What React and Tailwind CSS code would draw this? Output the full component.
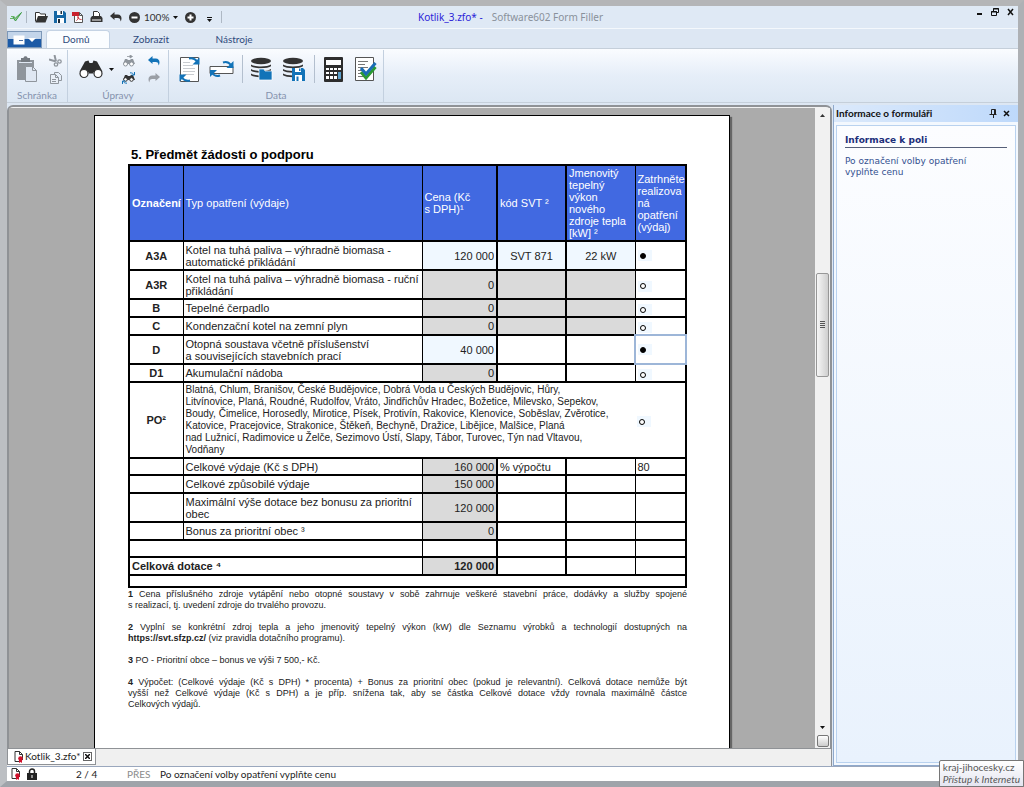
import React from 'react';

const ui = "font-['Lato',sans-serif]";

function Icon({ w, h, children, className = '' }) {
  return (
    <svg width={w} height={h} viewBox={`0 0 ${w} ${h}`} fill="none" className={`block shrink-0 ${className}`} aria-hidden="true">
      {children}
    </svg>
  );
}

function Btn({ label, className = '', children }) {
  return (
    <button type="button" aria-label={label} className={`flex shrink-0 items-center justify-center ${className}`}>
      {children}
    </button>
  );
}

const Caret = () => (
  <Icon w={5} h={3}><path d="M0 0h5L2.5 3z" fill="#111" /></Icon>
);

const UndoArrow = ({ color }) => (
  <Icon w={12} h={10}>
    <path d="M0 4 4.5 0v2.6h3.2c2.600 0 3.800 1.800 3.800 3.800 0 1.200-.4 2.300-1 3.100.1-2.500-.9-3.500-2.800-3.500H4.500V8z" fill={color} />
  </Icon>
);

const RedoArrow = ({ color }) => (
  <Icon w={12} h={10}>
    <path d="M12 4 7.500 0v2.600H4.300C1.700 2.600.5 4.400.5 6.400c0 1.200.4 2.300 1 3.100C1.400 7 2.400 6 4.300 6h3.200v2z" fill={color} />
  </Icon>
);

const Binoculars = ({ w, h, color }) => (
  <svg width={w} height={h} viewBox="0 0 24 18" className="block" aria-hidden="true">
    <path d="M6 1 9.500 0l1 2.500h3L14.500 0 18 1l5.500 10-5.500 2-3-1.500H9L6 13 .5 11z" fill={color} />
    <circle cx="5" cy="13" r="4" fill="#fff" stroke={color} strokeWidth="1.200" />
    <circle cx="19" cy="13" r="4" fill="#fff" stroke={color} strokeWidth="1.200" />
    <rect x="9.500" y="8" width="5" height="5" fill={color} />
  </svg>
);

const SealDoc = ({ color = '#333' }) => (
  <Icon w={10} h={12}>
    <path d="M1 .5h4.500l3 3V9M1 .5v10h4M5.500.5v3h3" stroke={color} fill="#fff" />
    <circle cx="6.500" cy="7.500" r="2.300" fill="#d0112b" />
    <path d="M5 8.500h3V12l-1.500-1L5 12z" fill="#d0112b" />
  </Icon>
);

const Database = ({ children }) => (
  <Icon w={22} h={24}>
    <path d="M0 7.500c3 2.600 17 2.600 20 0v1.800c-3 2.600-17 2.600-20 0zM0 12c3 2.600 17 2.600 20 0v1.800c-3 2.600-17 2.600-20 0zM0 16.500c3 2.600 17 2.600 20 0v1.800c-3 2.600-17 2.600-20 0z" fill="#333" />
    <ellipse cx="10" cy="4" rx="10" ry="3.200" fill="#333" />
    {children}
  </Icon>
);

const FloppyBlue = () => (
  <g>
    <path d="M9 11h11l2 2v11H9z" fill="#1273b8" />
    <path d="M12 11h6v4h-6zM12 18h7v6h-7z" fill="#fff" />
    <path d="M16 11.500h1.500V14H16zM13.500 19.500h2V24h-2z" fill="#1273b8" />
  </g>
);

function QuickBar() {
  return (
    <div className="flex flex-1 items-center">
      <Btn label="Software602" className="ml-[3px] w-3">
        <Icon w={12} h={10}><path d="M1 4.500h3.500M0 6.500h3" stroke="#67b567" /><path d="M3 5.500 5.500 9 11.500.5 5.500 6z" stroke="#3f9b45" fill="#9fd09f" /></Icon>
      </Btn>
      <span className="ml-[4px] h-3 w-px bg-[#aeb8c4]" />
      <Btn label="Otevřít" className="ml-[8px] w-3">
        <Icon w={13} h={11}><path d="M.5 9.500v-9h4l1 1.500h5v2" stroke="#333" fill="#fff" /><path d="M3 4h10l-2.500 6.500H.5z" fill="#333" /></Icon>
      </Btn>
      <Btn label="Uložit" className="ml-[7px] w-3">
        <Icon w={12} h={12}><path d="M0 0h10l2 2v10H0z" fill="#1667a4" /><path d="M3 0h6v4H3zM3 7h7v5H3z" fill="#fff" /><path d="M6.500 0H8v3H6.500zM4 8h2v4H4z" fill="#1f2d3b" /></Icon>
      </Btn>
      <Btn label="Uložit jako PDF" className="ml-[6px] w-3">
        <Icon w={12} h={12}><path d="M2.500 1.500h5l3 3v7h-8zM7.500 1.500v3h3" fill="#fff" stroke="#555" /><path d="M0 1h7v4H0z" fill="#c9202d" /><path d="M4.500 9.500c2-1 2-4 1.500-4s0 3 3.500 3" stroke="#c9202d" /></Icon>
      </Btn>
      <Btn label="Tisk" className="ml-[6px] w-3">
        <Icon w={13} h={12}><path d="M3.500 6V.5h4l2 2V6" stroke="#333" fill="#fff" /><path d="M2 5h9l1.500 2v4H.5V7z" fill="#333" /><path d="M2 9h9" stroke="#fff" /></Icon>
      </Btn>
      <Btn label="Zpět" className="ml-[8px] w-3"><UndoArrow color="#333" /></Btn>
      <Btn label="Zmenšit" className="ml-[6px] w-3">
        <Icon w={11} h={11}><circle cx="5.500" cy="5.500" r="5.500" fill="#333" /><path d="M2.500 5.500h6" stroke="#fff" strokeWidth="2" /></Icon>
      </Btn>
      <span className="ml-[4px] w-6 text-[10px] text-[#333]">100%</span>
      <Btn label="Měřítko" className="ml-[3px] w-2"><Caret /></Btn>
      <Btn label="Zvětšit" className="ml-[5px] w-3">
        <Icon w={11} h={11}><circle cx="5.500" cy="5.500" r="5.500" fill="#333" /><path d="M2.500 5.500h6M5.500 2.500v6" stroke="#fff" strokeWidth="2" /></Icon>
      </Btn>
      <Btn label="Přizpůsobit panel" className="ml-[9px] mt-1 w-2">
        <Icon w={5} h={5}><path d="M0 .5h5" stroke="#111" /><path d="M0 2h5L2.500 5z" fill="#111" /></Icon>
      </Btn>
      <span className="ml-[8px] h-3 w-px bg-[#aeb8c4]" />
    </div>
  );
}

function TitleBar() {
  return (
    <header className="flex h-[22px] shrink-0 items-center bg-[#dfe9f5]">
      <QuickBar />
      <h1 className="flex gap-[9px] font-['Noto_Sans',sans-serif] text-[10px]">
        <span className="text-[#2b22d8]">Kotlik_3.zfo* -</span>
        <span className="text-[#8a919b]">Software602 Form Filler</span>
      </h1>
      <div className="mb-[10px] flex flex-1 justify-end gap-[8px] pr-[4px]">
        <Btn label="Minimalizovat"><Icon w={7} h={8}><path d="M1 6h5" stroke="#111" strokeWidth="2" /></Icon></Btn>
        <Btn label="Obnovit"><Icon w={8} h={8}><path d="M2.500 3V.5h5v4H6M2 1h6" stroke="#111" /><path d="M.5 3.500h5v4h-5zM0 4h6" stroke="#111" /></Icon></Btn>
        <Btn label="Zavřít"><Icon w={7} h={8}><path d="m1 1 5 6M6 1 1 7" stroke="#111" strokeWidth="1.500" /></Icon></Btn>
      </div>
    </header>
  );
}

function Tabs() {
  return (
    <nav className="flex h-5 shrink-0 items-end border-t border-[#f4f8fc] bg-[#dde7f3] text-[10px] text-[#2f4a7c]">
      <Btn label="Nabídka aplikace" className="h-[17px] w-[35px] border border-[#7d98b8] bg-linear-to-b from-[#c3d5ea] from-45% to-[#1c5aa6] to-50%">
        <Icon w={24} h={10}><path d="M.5.5h11v9H.5z" fill="#fff" /><path d="M6 5.500h4" stroke="#4a6fa5" /><path d="M15 3h8l-4 4z" fill="#fff" /></Icon>
      </Btn>
      <button type="button" className="ml-1 h-[18px] w-16 rounded-t-sm border border-b-0 border-[#c5d3e4] bg-[#fbfdff] pr-1">Domů</button>
      <button type="button" className="h-[18px] w-[82px]">Zobrazit</button>
      <button type="button" className="h-[18px] w-[84px]">Nástroje</button>
    </nav>
  );
}

function Group({ label, className, children }) {
  return (
    <section className={`flex flex-col border-r border-[#c3d0df] ${className}`}>
      <div className="flex flex-1 items-center">{children}</div>
      <span className="h-[14px] text-center leading-[14px] text-[#8592ad]">{label}</span>
    </section>
  );
}

const Sep = () => <span className="block h-7 w-px bg-[#b3bfce]" />;

function Ribbon() {
  return (
    <div className="flex h-[55px] shrink-0 border-y border-[#c5cfda] bg-linear-to-b from-[#fafcff] via-[#e6eef8] to-[#dce7f3] pt-px text-[10px]">
      <Group label="Schránka" className="w-[61px]">
        <Btn label="Vložit" className="ml-[10px]">
          <Icon w={20} h={26}>
            <path d="M0 4h17v20H0z" fill="#8f959c" /><path d="M4 2h2.500c0-2.500 4-2.500 4 0H13v4H4z" fill="#757b82" /><path d="M2 6.500h13" stroke="#dfe7f2" />
            <path d="M8.500 10.500h7l4 4v11h-11z" fill="#dfe7f2" stroke="#8f959c" /><path d="M15.500 10.500v4h4" stroke="#8f959c" />
          </Icon>
        </Btn>
        <div className="ml-3 flex flex-col gap-[5px]">
          <Btn label="Vyjmout"><Icon w={13} h={12}><path d="M5.500 0 7 6.500M0 4.500l7 2" stroke="#8f959c" strokeWidth="2" /><circle cx="10.500" cy="6.500" r="1.700" stroke="#8f959c" strokeWidth="1.300" /><circle cx="7" cy="9.500" r="1.700" stroke="#8f959c" strokeWidth="1.300" /></Icon></Btn>
          <Btn label="Kopírovat"><Icon w={12} h={12}><path d="M4.500 2.500v-2h4l3 3v5h-3" stroke="#8f959c" /><path d="M.5 2.500h5l3 3v6h-8zM5.500 2.500v3h3M2 7.500h4M2 9.500h4" stroke="#8f959c" fill="#e9eff7" /></Icon></Btn>
        </div>
      </Group>
      <Group label="Úpravy" className="w-[101px]">
        <Btn label="Najít" className="ml-[11px]"><Binoculars w={24} h={19} color="#2d2d2d" /></Btn>
        <Btn label="Možnosti hledání" className="ml-[6px]"><Caret /></Btn>
        <div className="ml-[8px] flex flex-col gap-[5px]">
          <Btn label="Najít další">
            <Icon w={13} h={12}><path d="M3 4h2l1 1h2l1-1h2l2 5H1z" fill="#8f959c" /><circle cx="3.500" cy="9" r="2" fill="#fff" stroke="#8f959c" /><circle cx="9.500" cy="9" r="2" fill="#fff" stroke="#8f959c" /><path d="M5 1.500h4M8 0l2.500 1.500L8 3z" stroke="#8f959c" fill="#8f959c" strokeWidth=".8" /></Icon>
          </Btn>
          <Btn label="Nahradit">
            <Icon w={13} h={12}><path d="M3 3h2l1 1h2l1-1h2l2 5H1z" fill="#333" /><circle cx="3.500" cy="7.500" r="1.800" fill="#fff" stroke="#333" /><circle cx="9.500" cy="7.500" r="1.800" fill="#fff" stroke="#333" /><path d="M8 .8c2 0 3 .5 4 2M12.500 0v3h-3M5 11.200c-2 0-3-.5-4-2M.5 12V9h3" stroke="#1273b8" /></Icon>
          </Btn>
        </div>
        <div className="ml-[13px] flex flex-col gap-[7px]">
          <Btn label="Zpět"><UndoArrow color="#1273b8" /></Btn>
          <Btn label="Znovu"><RedoArrow color="#9a9fa6" /></Btn>
        </div>
      </Group>
      <Group label="Data" className="w-[215px]">
        <Btn label="Obnovit formulář" className="ml-[10px]">
          <Icon w={22} h={27}>
            <path d="M1.500 1.500h18v24h-18z" fill="#fff" stroke="#555" /><path d="M4 6.500h7M4 9.500h10M4 12.500h12M4 15.500h12M4 18.500h11" stroke="#c9ccd0" />
            <path d="M10 2.500c4-1 6 0 8 3" stroke="#1273b8" strokeWidth="2" /><path d="M20.500 1.500v7h-7z" fill="#1273b8" />
            <path d="M11 24.500c-4 1-6 0-8-3" stroke="#1273b8" strokeWidth="2" /><path d="M.5 25.500v-7h7z" fill="#1273b8" />
          </Icon>
        </Btn>
        <Btn label="Obnovit pole" className="ml-[8px]">
          <Icon w={26} h={18}>
            <path d="M1 6.500h23v7H1z" fill="#fff" stroke="#555" />
            <path d="M14 2.500c4-1.500 6 0 8 2.500" stroke="#1273b8" strokeWidth="2" /><path d="M24.500 1v7h-7z" fill="#1273b8" />
            <path d="M11 15.500c-4 1.500-6 0-8-2.500" stroke="#1273b8" strokeWidth="2" /><path d="M1 17v-7h7z" fill="#1273b8" />
          </Icon>
        </Btn>
        <span className="ml-[7px]"><Sep /></span>
        <Btn label="Načíst data" className="ml-[8px]">
          <Database><path d="M8 12h5l1 2h7v9H8z" fill="#1273b8" stroke="#fff" strokeWidth=".7" /></Database>
        </Btn>
        <Btn label="Uložit data" className="ml-[10px]"><Database><FloppyBlue /></Database></Btn>
        <span className="ml-[9px]"><Sep /></span>
        <Btn label="Přepočítat" className="ml-[9px]">
          <Icon w={19} h={25}>
            <rect width="19" height="25" rx="1" fill="#2d2d2d" /><path d="M2 3h15v5H2z" fill="#fff" />
            <path d="M2 11h3v2H2zM6 11h3v2H6zM10 11h3v2h-3zM14 11h3v2h-3zM2 15h3v2H2zM6 15h3v2H6zM10 15h3v2h-3zM2 19h3v3H2zM6 19h3v3H6zM10 19h3v3h-3z" fill="#fff" />
            <path d="M14 15h3v7h-3z" fill="#5b9fca" />
          </Icon>
        </Btn>
        <Btn label="Zkontrolovat" className="ml-3">
          <Icon w={22} h={26}>
            <path d="M.5 1.500h18v23H.5z" fill="#fff" stroke="#555" /><path d="M3 5.500h10M3 8.500h7M3 11.500h10M3 14.500h4M3 17.500h4M3 20.500h6" stroke="#777" />
            <path d="m6 16 5 6L20.500 11" stroke="#2b9a33" strokeWidth="3" /><path d="m6 12 5 6L20.500 7" stroke="#1b6db5" strokeWidth="3" />
          </Icon>
        </Btn>
      </Group>
    </div>
  );
}

const cell = 'border-y-2 border-black px-[2px]';

function Field({ label, value, align }) {
  return <input aria-label={label} defaultValue={value} className={`block w-full bg-transparent p-0 leading-[12px] outline-none ${align}`} />;
}

function Choice({ name, checked, top = 'pt-[3px]' }) {
  return (
    <div className={top}>
      <div className="flex h-[11px] w-[14px] items-center bg-[#f0f8ff] pl-[2px]">
        <input type="radio" name={name} aria-label={`Realizovat ${name}`} defaultChecked={checked} className="h-[6px] w-[6px] appearance-none rounded-full border border-black bg-white checked:bg-black" />
      </div>
    </div>
  );
}

const gray = 'bg-[#dadada]';
const pale = 'bg-[#f0f8ff]';

const measures = [
  { id: 'A3A', h: 'h-[29px]', text: <>Kotel na tuhá paliva – výhradně biomasa -<br />automatické přikládání</>, price: '120 000', edit: true, svt: 'SVT 871', kw: '22 kW', fill: pale, on: true },
  { id: 'A3R', h: 'h-[29px]', text: <>Kotel na tuhá paliva – výhradně biomasa - ruční<br />přikládání</>, price: '0', fill: gray },
  { id: 'B', h: 'h-[18px]', text: 'Tepelné čerpadlo', price: '0', fill: gray },
  { id: 'C', h: 'h-[18px]', text: 'Kondenzační kotel na zemní plyn', price: '0', fill: gray },
  { id: 'D', h: 'h-[29px]', text: <>Otopná soustava včetně příslušenství<br />a souvisejících stavebních prací</>, price: '40 000', edit: true, fill: '', on: true, focus: true },
  { id: 'D1', h: 'h-[18px]', text: 'Akumulační nádoba', price: '0', fill: '' },
];

const totals = [
  { h: 'h-[17px]', text: 'Celkové výdaje (Kč s DPH)', price: '160 000', note: '% výpočtu', last: '80' },
  { h: 'h-[18px]', text: 'Celkové způsobilé výdaje', price: '150 000' },
  { h: 'h-[29px]', text: <>Maximální výše dotace bez bonusu za prioritní<br />obec</>, price: '120 000' },
  { h: 'h-[18px]', text: 'Bonus za prioritní obec ³', price: '0' },
];

function FormTable() {
  return (
    <table className="w-full table-fixed border-collapse border-2 border-black text-[11px] leading-[12px] whitespace-nowrap text-[#222]">
      <colgroup>
        <col className="w-[54px]" /><col /><col className="w-[75px]" /><col className="w-[69px]" /><col className="w-[69px]" /><col className="w-[51px]" />
      </colgroup>
      <thead>
        <tr className="h-[76px] bg-[#4169e1] text-left text-white">
          <th className={`${cell} border-r`}>Označení</th>
          <th className={`${cell} border-r font-normal`}>Typ opatření (výdaje)</th>
          <th className={`${cell} border-r-2 font-normal`}>Cena (Kč<br />s DPH)¹</th>
          <th className={`${cell} border-r-2 font-normal`}>kód SVT ²</th>
          <th className={`${cell} border-r font-normal`}>Jmenovitý<br />tepelný<br />výkon<br />nového<br />zdroje tepla<br />[kW] ²</th>
          <th className={`${cell} font-normal`}>Zatrhněte<br />realizova<br />ná<br />opatření<br />(výdaj)</th>
        </tr>
      </thead>
      <tbody>
        {measures.map((m) => (
          <tr key={m.id} className={m.h}>
            <th className={`${cell} border-r text-center`}>{m.id}</th>
            <td className={`${cell} border-r`}>{m.text}</td>
            <td className={`${cell} border-r-2 text-right ${m.edit ? pale : gray}`}>
              {m.edit ? <Field label={`Cena ${m.id}`} value={m.price} align="text-right" /> : m.price}
            </td>
            <td className={`${cell} border-r-2 ${m.fill}`}>{m.svt && <Field label="Kód SVT" value={m.svt} align="text-center" />}</td>
            <td className={`${cell} border-r ${m.fill}`}>{m.kw && <Field label="Výkon" value={m.kw} align="text-center" />}</td>
            <td className={`${cell} ${m.focus ? 'outline-2 -outline-offset-1 outline-[#9db6d8]' : ''}`}><Choice name={m.id} checked={m.on} top={m.on ? 'pt-0' : 'pt-[3px]'} /></td>
          </tr>
        ))}
        <tr className="h-[76px]">
          <th className={`${cell} border-r text-center`}>PO²</th>
          <td className={`${cell} text-[10px]`} colSpan={4}>
            Blatná, Chlum, Branišov, České Budějovice, Dobrá Voda u Českých Budějovic, Hůry,<br />
            Litvínovice, Planá, Roudné, Rudolfov, Vráto, Jindřichův Hradec, Božetice, Milevsko, Sepekov,<br />
            Boudy, Čimelice, Horosedly, Mirotice, Písek, Protivín, Rakovice, Klenovice, Soběslav, Zvěrotice,<br />
            Katovice, Pracejovice, Strakonice, Štěkeň, Bechyně, Dražice, Libějice, Malšice, Planá<br />
            nad Lužnicí, Radimovice u Želče, Sezimovo Ústí, Slapy, Tábor, Turovec, Týn nad Vltavou,<br />
            Vodňany
          </td>
          <td className={cell}><Choice name="PO" /></td>
        </tr>
        {totals.map((t, i) => (
          <tr key={i} className={t.h}>
            <td className={`${cell} border-r`} />
            <td className={`${cell} border-r`}>{t.text}</td>
            <td className={`${cell} border-r-2 text-right ${gray}`}>{t.price}</td>
            <td className={`${cell} border-r-2`}>{t.note}</td>
            <td className={`${cell} border-r`} />
            <td className={cell}>{t.last}</td>
          </tr>
        ))}
        <tr className="h-[17px]">
          <td className={`${cell} border-r`} colSpan={2} />
          <td className={`${cell} border-r-2`} /><td className={`${cell} border-r-2`} /><td className={`${cell} border-r`} /><td className={cell} />
        </tr>
        <tr className="h-[18px] font-bold">
          <td className={`${cell} border-r`} colSpan={2}>Celková dotace ⁴</td>
          <td className={`${cell} border-r-2 text-right ${gray}`}>120 000</td>
          <td className={`${cell} border-r-2`} /><td className={`${cell} border-r`} /><td className={cell} />
        </tr>
        <tr className="h-[12px]"><td className={cell} colSpan={6} /></tr>
      </tbody>
    </table>
  );
}

const J = ({ children }) => <span className="block [text-align-last:justify]">{children}</span>;

function Page() {
  return (
    <article className="w-[636px] shrink-0 border border-b-0 border-black bg-white px-[33px] pt-[30px] font-['Liberation_Sans',Arial,sans-serif] shadow-[2px_2px_1px_#666]">
      <h2 className="pb-px pl-[3px] text-[13px] leading-[17px] font-bold text-black">5. Předmět žádosti o podporu</h2>
      <div className="w-[559px]">
        <FormTable />
        <div className="flex flex-col gap-[11px] pt-px text-[9px] leading-[11px] whitespace-nowrap text-[#222]">
          <p><J><b>1</b> Cena příslušného zdroje vytápění nebo otopné soustavy v sobě zahrnuje veškeré stavební práce, dodávky a služby spojené</J>s realizací, tj. uvedení zdroje do trvalého provozu.</p>
          <p><J><b>2</b> Vyplní se konkrétní zdroj tepla a jeho jmenovitý tepelný výkon (kW) dle Seznamu výrobků a technologií dostupných na</J><b>https://svt.sfzp.cz/</b> (viz pravidla dotačního programu).</p>
          <p><b>3</b> PO - Prioritní obce – bonus ve výši 7 500,- Kč.</p>
          <p><J><b>4</b> Výpočet: (Celkové výdaje (Kč s DPH) * procenta) + Bonus za prioritní obec (pokud je relevantní). Celková dotace nemůže být</J><J>vyšší než Celkové výdaje (Kč s DPH) a je příp. snížena tak, aby se částka Celkové dotace vždy rovnala maximálně částce</J>Celkových výdajů.</p>
        </div>
      </div>
    </article>
  );
}

function Scrollbar() {
  return (
    <div className="flex w-[15px] shrink-0 flex-col items-center bg-[#f1f1f1]">
      <Btn label="Nahoru" className="h-[14px] w-full"><Icon w={5} h={3}><path d="M0 3h5L2.500 0z" fill="#333" /></Icon></Btn>
      <div className="flex w-full flex-1 flex-col px-px">
        <div className="flex-[151]" />
        <div className="flex flex-[103] flex-col items-center justify-center gap-px rounded-xs border border-[#979797] bg-linear-to-r from-[#f6f6f6] to-[#cfcfcf]">
          <span className="h-px w-[5px] bg-[#555]" /><span className="h-px w-[5px] bg-[#555]" /><span className="h-px w-[5px] bg-[#555]" /><span className="h-px w-[5px] bg-[#555]" />
        </div>
        <div className="flex-[345]" />
      </div>
      <Btn label="Dolů" className="h-[12px] w-full"><Caret /></Btn>
      <Btn label="Procházet" className="mt-[2px] mb-px h-[12px] w-[12px] rounded-xs border border-[#777] bg-linear-to-b from-white to-[#ccc]" />
    </div>
  );
}

function SidePane() {
  return (
    <aside className="flex w-[185px] shrink-0 flex-col border-b border-l border-[#8fa9cc] bg-[#f3f8fe]">
      <div className="flex h-[17px] items-center bg-linear-to-r from-[#dbe9fb] to-[#bed9fb] pr-[8px] pl-[2px]">
        <h2 className="flex-1 text-[10px] font-bold text-[#111]">Informace o formuláři</h2>
        <Btn label="Připnout"><Icon w={8} h={9}><path d="M2.500.5h4v5h-4zM5.500.5v5M.5 5.500h7M4.500 6v3" stroke="#222" /></Icon></Btn>
        <Btn label="Zavřít panel" className="ml-[6px]"><Icon w={7} h={7}><path d="m1 1 5 5M6 1 1 6" stroke="#111" strokeWidth="1.500" /></Icon></Btn>
      </div>
      <div className="mx-[2px] mt-[3px] mb-[2px] flex-1 border border-[#b9d2ef] bg-linear-to-b from-[#fcfdff] to-[#e9f2fd] px-[8px] pt-[9px] font-['DejaVu_Sans',Verdana,sans-serif] text-[9px] leading-[11px]">
        <h3 className="border-b border-[#555f78] pb-px font-bold text-[#1c2f7a]">Informace k poli</h3>
        <p className="mt-[8px] text-[#33508f]">Po označení volby opatření<br />vyplňte cenu</p>
      </div>
    </aside>
  );
}

export default function App() {
  return (
    <div className={`relative h-screen overflow-hidden ${ui}`}>
      <div className="flex h-full flex-col border-6 border-l-7 border-t-[#b4b5b7] border-r-[#aeb1b5] border-b-[#9fa4aa] border-l-[#bcbfc3] bg-white">
        <TitleBar />
        <Tabs />
        <Ribbon />
        <main className="flex min-h-0 flex-1 bg-[#dde7f3] pt-[2px]">
          <div className="flex min-w-0 flex-1 flex-col">
            <div className="flex min-h-0 flex-1 rounded-t-md border-x-2 border-t-2 border-b border-[#8f9296] bg-[#f1f1f1] pt-px">
              <div className="flex min-w-0 flex-1 justify-center overflow-hidden bg-[#ababab] pt-[7px]"><Page /></div>
              <Scrollbar />
            </div>
            <div className="flex h-[17px] items-start border-r border-[#8f9296] bg-[#f0f0f0] text-[10px] text-[#222]">
              <div className="flex h-4 items-center gap-px border border-t-0 border-[#8f9296] bg-white pr-[3px] pl-[6px]">
                <SealDoc />
                <span>Kotlik_3.zfo*</span>
                <Btn label="Zavřít dokument" className="ml-px h-[9px] w-[9px] border border-[#666]"><Icon w={5} h={5}><path d="m0 0 5 5M5 0 0 5" stroke="#111" strokeWidth="1.500" /></Icon></Btn>
              </div>
            </div>
          </div>
          <div className="w-px shrink-0" />
          <SidePane />
        </main>
        <footer className="flex h-[15px] shrink-0 items-center border-t border-[#9aa7bd] bg-white text-[10px] text-[#222]">
          <span className="ml-[4px]"><SealDoc /></span>
          <span className="ml-[6px]"><Icon w={10} h={12}><path d="M2.500 5V3.500a2.500 2.500 0 0 1 5 0V5" stroke="#222" strokeWidth="1.500" /><path d="M0 5h10v7H0z" fill="#222" /><path d="M5 7v3" stroke="#fff" /></Icon></span>
          <span className="ml-[39px] w-[51px]">2 / 4</span>
          <span className="w-[33px] text-[#8b8b8b]">PŘES</span>
          <span>Po označení volby opatření vyplňte cenu</span>
        </footer>
      </div>
      <div role="tooltip" className="absolute right-0 bottom-0 h-[27px] rounded-tl-xs border border-[#767676] bg-linear-to-b from-white to-[#e4e5f0] px-[3px] text-[10px] leading-[12px] whitespace-nowrap text-[#575757]">
        kraj-jihocesky.cz<br /><i>Přístup k Internetu</i>
      </div>
    </div>
  );
}
